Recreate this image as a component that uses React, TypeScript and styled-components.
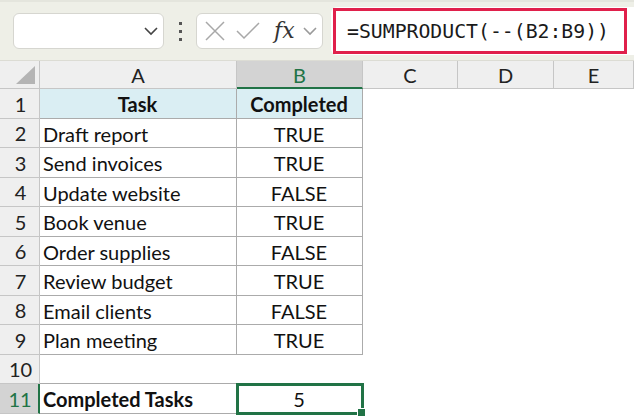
import React from "react";
import styled, { createGlobalStyle } from "styled-components";

const GlobalStyle = createGlobalStyle`
	html, body {
		margin: 0;
		padding: 0;
		background: #ffffff;
	}
	* {
		box-sizing: border-box;
	}
`;

const GREEN = "#217346";
const LINE = "#ababab";
const HEAD_LINE = "#c6c6c6";

const Sheet = styled.div`
	width: 634px;
	height: 418px;
	overflow: hidden;
	display: flex;
	flex-direction: column;
	font-family: Lato, "Liberation Sans", sans-serif;
	color: #111;
`;

const Toolbar = styled.div`
	flex: 0 0 61px;
	display: flex;
	align-items: center;
	padding: 0 0 0 13px;
	background: #eeefe7;
	border-top: 2px solid #e4e5dd;
	border-bottom: 1px solid #dcdcd4;
`;

const NameBox = styled.div`
	width: 151px;
	height: 36px;
	background: #fff;
	border: 1px solid #d6d6d0;
	border-radius: 6px;
	display: flex;
	align-items: center;
	justify-content: flex-end;
	padding-right: 4px;
`;

const Grip = styled.div`
	width: 32px;
	display: flex;
	flex-direction: column;
	align-items: center;
	gap: 5px;
	span {
		width: 3px;
		height: 3px;
		background: #555;
	}
`;

const FxGroup = styled.div`
	width: 127px;
	height: 36px;
	background: #fff;
	border: 1px solid #d6d6d0;
	border-radius: 6px;
	display: flex;
	align-items: center;
	padding-left: 7px;
	gap: 9px;
`;

const FxLabel = styled.span`
	font-family: "DejaVu Serif", "Liberation Serif", serif;
	font-style: italic;
	font-size: 22px;
	color: #333;
	margin-left: 4px;
	margin-right: -2px;
	line-height: 1;
`;

const FormulaWrap = styled.div`
	flex: 1;
	height: 48px;
	margin-left: 8px;
	background: #fff;
	border-radius: 6px 0 0 6px;
	display: flex;
	align-items: center;
	padding-left: 2px;
	padding-right: 7px;
`;

const FormulaBox = styled.div`
	flex: 1;
	height: 46px;
	border: 3px solid #e0204b;
	display: flex;
	align-items: center;
	padding-left: 11px;
	font-family: "DejaVu Sans Mono", "Liberation Mono", monospace;
	font-size: 19.8px;
	color: #1a1a1a;
	white-space: nowrap;
`;

const Grid = styled.div`
	display: grid;
	grid-template-columns: 40px 197px 126px 95px 96px 1fr;
	grid-template-rows: 28px repeat(11, 29.5px);
`;

const Corner = styled.div`
	background: #efefef;
	border-right: 1px solid ${HEAD_LINE};
	border-bottom: 1px solid ${HEAD_LINE};
	display: flex;
	align-items: flex-end;
	justify-content: flex-end;
	padding: 0 4px 4px 0;
`;

const ColHead = styled.div<{ $active?: boolean }>`
	background: ${(p) => (p.$active ? "#d3d3d3" : "#efefef")};
	color: ${(p) => (p.$active ? GREEN : "#222")};
	border-right: 1px solid ${HEAD_LINE};
	border-bottom: ${(p) => (p.$active ? `2px solid ${GREEN}` : `1px solid ${HEAD_LINE}`)};
	display: flex;
	align-items: center;
	justify-content: center;
	font-size: 20px;
	padding-top: 1px;
`;

const RowHead = styled.div<{ $active?: boolean }>`
	background: ${(p) => (p.$active ? "#d3d3d3" : "#efefef")};
	color: ${(p) => (p.$active ? GREEN : "#222")};
	border-right: ${(p) => (p.$active ? `2px solid ${GREEN}` : `1px solid ${HEAD_LINE}`)};
	border-bottom: 1px solid ${HEAD_LINE};
	display: flex;
	align-items: center;
	justify-content: center;
	font-size: 20px;
	padding: 1px 0 0 2px;
`;

type Frame = "table" | "under" | "box" | "none";

const Cell = styled.div<{ $frame?: Frame; $center?: boolean; $bold?: boolean; $head?: boolean; $active?: boolean }>`
	position: relative;
	display: flex;
	align-items: center;
	justify-content: ${(p) => (p.$center ? "center" : "flex-start")};
	padding: 2px 4px 0 3px;
	font-size: 20px;
	font-weight: ${(p) => (p.$bold ? 700 : 400)};
	background: ${(p) => (p.$head ? "#daeef3" : "#fff")};
	white-space: nowrap;
	border-right: ${(p) => (p.$frame === "table" || p.$frame === "box" ? `1px solid ${LINE}` : "none")};
	border-bottom: ${(p) => (p.$frame && p.$frame !== "none" ? `1px solid ${LINE}` : "none")};
	${(p) =>
		p.$active &&
		`
		outline: 3px solid ${GREEN};
		outline-offset: -2px;
		z-index: 1;
		&::after {
			content: "";
			position: absolute;
			right: -4px;
			bottom: -4px;
			width: 7px;
			height: 7px;
			background: ${GREEN};
			border: 1px solid #fff;
		}
	`}
`;

const Chevron = ({ color = "#444" }: { color?: string }) => (
	<svg width="16" height="10" viewBox="0 0 16 10">
		<polyline points="2,2 8,8 14,2" fill="none" stroke={color} strokeWidth="1.6" />
	</svg>
);

const CrossIcon = () => (
	<svg width="22" height="22" viewBox="0 0 22 22">
		<path d="M2 2 L20 20 M20 2 L2 20" stroke="#a8a8a8" strokeWidth="1.5" fill="none" />
	</svg>
);

const CheckIcon = () => (
	<svg width="26" height="20" viewBox="0 0 26 20">
		<polyline points="2,10 9,17 24,2" fill="none" stroke="#a8a8a8" strokeWidth="1.5" />
	</svg>
);

const SelectAll = () => (
	<svg width="19" height="18" viewBox="0 0 19 18">
		<polygon points="19,0 19,18 0,18" fill="#b4b4b4" />
	</svg>
);

const tasks: Array<[string, boolean]> = [
	["Draft report", true],
	["Send invoices", true],
	["Update website", false],
	["Book venue", true],
	["Order supplies", false],
	["Review budget", true],
	["Email clients", false],
	["Plan meeting", true],
];

const columns = ["A", "B", "C", "D", "E"];

export default function App() {
	const completed = tasks.filter(([, done]) => done).length;

	return (
		<>
			<GlobalStyle />
			<Sheet>
				<Toolbar>
					<NameBox>
						<Chevron />
					</NameBox>
					<Grip>
						<span />
						<span />
						<span />
					</Grip>
					<FxGroup>
						<CrossIcon />
						<CheckIcon />
						<FxLabel>fx</FxLabel>
						<Chevron color="#9a9a9a" />
					</FxGroup>
					<FormulaWrap>
						<FormulaBox>=SUMPRODUCT(--(B2:B9))</FormulaBox>
					</FormulaWrap>
				</Toolbar>
				<Grid>
					<Corner>
						<SelectAll />
					</Corner>
					{columns.map((c) => (
						<ColHead key={c} $active={c === "B"}>
							{c}
						</ColHead>
					))}

					<RowHead>1</RowHead>
					<Cell $frame="table" $center $bold $head>
						Task
					</Cell>
					<Cell $frame="table" $center $bold $head>
						Completed
					</Cell>
					<Cell />
					<Cell />
					<Cell />

					{tasks.map(([name, done], i) => (
						<React.Fragment key={name}>
							<RowHead>{i + 2}</RowHead>
							<Cell $frame="table">{name}</Cell>
							<Cell $frame="table" $center>
								{done ? "TRUE" : "FALSE"}
							</Cell>
							<Cell />
							<Cell />
							<Cell />
						</React.Fragment>
					))}

					<RowHead>10</RowHead>
					<Cell $frame="under" />
					<Cell $frame="under" />
					<Cell />
					<Cell />
					<Cell />

					<RowHead $active>11</RowHead>
					<Cell $frame="box" $bold>
						Completed Tasks
					</Cell>
					<Cell $frame="box" $center $active>
						{completed}
					</Cell>
					<Cell />
					<Cell />
					<Cell />
				</Grid>
			</Sheet>
		</>
	);
}
